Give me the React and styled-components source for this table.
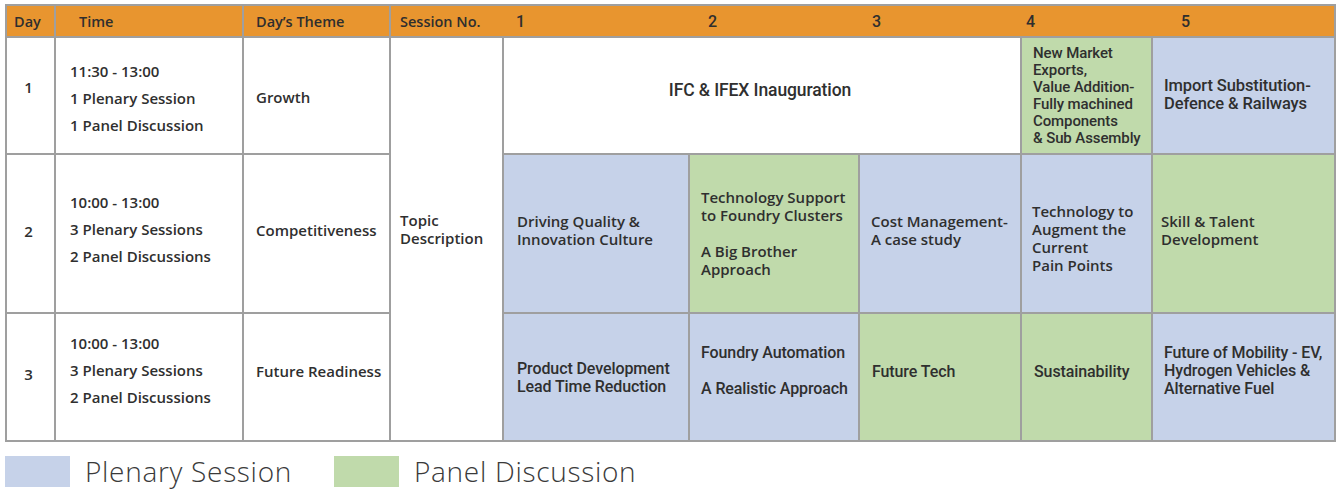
import React from 'react'
import styled, { createGlobalStyle, css } from 'styled-components'

const GlobalStyle = createGlobalStyle`
  html, body { margin: 0; padding: 0; background: #ffffff; }
  body { font-family: "Open Sans", "Noto Sans", sans-serif; color: #333; }
`

const LINE = '#9f9f9f'
const tones = {
  white: '#ffffff',
  blue: '#c6d2e9',
  green: '#c0daab',
}

const sansFont = css`
  font-family: "Open Sans", "Noto Sans", sans-serif;
  font-weight: 600;
  font-size: 15px;
`
const narrowFont = css`
  font-family: Roboto, "Liberation Sans", sans-serif;
  font-weight: 500;
  font-size: 16px;
  letter-spacing: -0.1px;
`

const Page = styled.div`
  padding: 4px 0 0 5px;
`

const Table = styled.div`
  display: grid;
  grid-template-columns: 49px 188px 147px 113px 186px 170px 162px 131px 183px;
  grid-template-rows: 32px 117px 159px 128px;
  width: fit-content;
  border-top: 2px solid ${LINE};
  border-left: 2px solid ${LINE};
`

const HeadCell = styled.div`
  background: #e8952f;
  border-bottom: 2px solid ${LINE};
  border-right: ${p => (p.$open ? 'none' : `2px solid ${LINE}`)};
  display: flex;
  align-items: center;
  padding-left: ${p => p.$pad}px;
  color: #2e2e2e;
  ${p => (p.$narrow ? narrowFont : sansFont)};
  font-size: ${p => (p.$narrow ? 16 : 14.5)}px;
`

const Cell = styled.div`
  grid-column: ${p => p.$col || 'auto'};
  grid-row: ${p => p.$row || 'auto'};
  background: ${p => tones[p.$tone || 'white']};
  border-right: 2px solid ${LINE};
  border-bottom: 2px solid ${LINE};
  display: flex;
  flex-direction: column;
  justify-content: center;
  align-items: ${p => (p.$center ? 'center' : 'flex-start')};
  padding: ${p => p.$shift > 0 ? `${p.$shift}px 0 0` : `0 0 ${-(p.$shift || 0)}px`};
  padding-left: ${p => (p.$center ? 0 : p.$pad ?? 12)}px;
  padding-right: 4px;
  color: #2f2f2f;
  line-height: ${p => p.$lh || 18}px;
  ${p => (p.$narrow ? narrowFont : sansFont)};
  ${p => p.$size && `font-size: ${p.$size}px;`}
`

const Block = styled.div`
  & + & { margin-top: ${p => p.$gap || 14}px; }
`

const Legend = styled.div`
  display: flex;
  align-items: center;
  margin-top: 10px;
`

const Swatch = styled.span`
  width: 65px;
  height: 31px;
  background: ${p => tones[p.$tone]};
  margin-right: 15px;
`

const LegendLabel = styled.span`
  font-family: "Open Sans", Lato, sans-serif;
  font-weight: 300;
  font-size: 28px;
  letter-spacing: 0.7px;
  color: #3a3a3a;
  margin-right: 42px;
`

const heads = [
  { label: 'Day', pad: 7 },
  { label: 'Time', pad: 23 },
  { label: 'Day’s Theme', pad: 12 },
  { label: 'Session No.', pad: 9, open: true },
  { label: '1', pad: 12, narrow: true, open: true },
  { label: '2', pad: 18, narrow: true, open: true },
  { label: '3', pad: 12, narrow: true, open: true },
  { label: '4', pad: 4, narrow: true, open: true },
  { label: '5', pad: 28, narrow: true },
]

const days = [
  { day: '1', shift: -18, timeShift: 6, themeShift: 2, time: '11:30 - 13:00', plenary: '1 Plenary Session', panel: '1 Panel Discussion', theme: 'Growth' },
  { day: '2', shift: -6, timeShift: -8, themeShift: -8, time: '10:00 - 13:00', plenary: '3 Plenary Sessions', panel: '2 Panel Discussions', theme: 'Competitiveness' },
  { day: '3', shift: -6, timeShift: -14, themeShift: -12, time: '10:00 - 13:00', plenary: '3 Plenary Sessions', panel: '2 Panel Discussions', theme: 'Future Readiness' },
]

function DayRows() {
  return days.map((d, i) => (
    <React.Fragment key={d.day}>
      <Cell $row={i + 2} $col={1} $center $shift={d.shift}>{d.day}</Cell>
      <Cell $row={i + 2} $col={2} $pad={14} $lh={27} $shift={d.timeShift}>
        <div>{d.time}</div>
        <div>{d.plenary}</div>
        <div>{d.panel}</div>
      </Cell>
      <Cell $row={i + 2} $col={3} $pad={12} $shift={d.themeShift}>{d.theme}</Cell>
    </React.Fragment>
  ))
}

export default function App() {
  return (
    <Page>
      <GlobalStyle />
      <Table>
        {heads.map(h => (
          <HeadCell key={h.label} $pad={h.pad} $narrow={h.narrow} $open={h.open}>
            {h.label}
          </HeadCell>
        ))}

        <DayRows />

        <Cell $col={4} $row="2 / 5" $pad={9} $shift={-20}>
          Topic<br />Description
        </Cell>

        {/* day 1 */}
        <Cell $col="5 / 8" $row={2} $center $narrow $size={17.5} $shift={-12}>IFC &amp; IFEX Inauguration</Cell>
        <Cell $col={8} $row={2} $tone="green" $narrow $size={15} $pad={11} $lh={17}>
          New Market<br />Exports,<br />Value Addition-<br />Fully machined<br />Components<br />&amp; Sub Assembly
        </Cell>
        <Cell $col={9} $row={2} $tone="blue" $narrow $size={16.5} $pad={11} $shift={-2}>
          Import Substitution-<br />Defence &amp; Railways
        </Cell>

        {/* day 2 */}
        <Cell $col={5} $row={3} $tone="blue" $pad={13} $shift={-8}>
          Driving Quality &amp;<br />Innovation Culture
        </Cell>
        <Cell $col={6} $row={3} $tone="green" $pad={11} $shift={-2}>
          <Block $gap={12}>Technology Support<br />to Foundry Clusters</Block>
          <Block $gap={12}>A Big Brother<br />Approach</Block>
        </Cell>
        <Cell $col={7} $row={3} $tone="blue" $pad={11} $shift={-8}>
          Cost Management-<br />A case study
        </Cell>
        <Cell $col={8} $row={3} $tone="blue" $pad={10} $shift={8}>
          Technology to<br />Augment the<br />Current<br />Pain Points
        </Cell>
        <Cell $col={9} $row={3} $tone="green" $pad={8} $shift={-8}>
          Skill &amp; Talent<br />Development
        </Cell>

        {/* day 3 */}
        <Cell $col={5} $row={4} $tone="blue" $narrow $pad={13} $shift={2}>
          Product Development<br />Lead Time Reduction
        </Cell>
        <Cell $col={6} $row={4} $tone="blue" $narrow $pad={11} $shift={-12}>
          <Block $gap={18}>Foundry Automation</Block>
          <Block $gap={18}>A Realistic Approach</Block>
        </Cell>
        <Cell $col={7} $row={4} $tone="green" $narrow $pad={12} $shift={-10}>Future Tech</Cell>
        <Cell $col={8} $row={4} $tone="green" $narrow $pad={12} $shift={-10}>Sustainability</Cell>
        <Cell $col={9} $row={4} $tone="blue" $narrow $pad={11} $shift={-12}>
          Future of Mobility - EV,<br />Hydrogen Vehicles &amp;<br />Alternative Fuel
        </Cell>
      </Table>

      <Legend>
        <Swatch $tone="blue" />
        <LegendLabel>Plenary Session</LegendLabel>
        <Swatch $tone="green" />
        <LegendLabel>Panel Discussion</LegendLabel>
      </Legend>
    </Page>
  )
}
